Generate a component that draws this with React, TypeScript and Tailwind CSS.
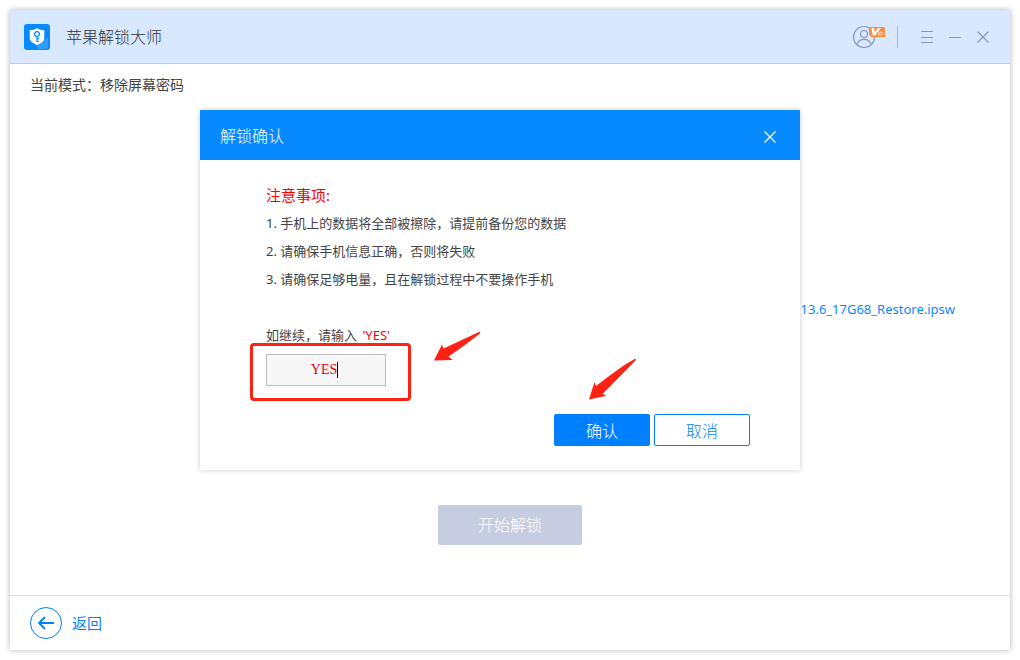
import { useState } from "react";

const notices = [
  "手机上的数据将全部被擦除，请提前备份您的数据",
  "请确保手机信息正确，否则将失败",
  "请确保足够电量，且在解锁过程中不要操作手机",
];

const Logo = () => (
  <svg viewBox="0 0 26 26" className="h-[26px] w-[26px]">
    <rect width="26" height="26" rx="3" fill="#078aff" />
    <path
      d="M12 20l6-4h3l1-2h2v7a3 3 0 0 1-2 4h-9v-3z"
      fill="#2f9dff"
    />
    <path
      d="M13 4c2 1.600 4.500 2.200 7.300 2.300v7.200c0 3.500-2.800 5.800-7.300 7.500-4.500-1.700-7.300-4-7.300-7.500V6.300C8.500 6.200 11 5.600 13 4z"
      fill="#fff"
    />
    <g fill="none" stroke="#078aff" strokeWidth="1.200">
      <circle cx="13" cy="10" r="2.400" />
      <path d="M13 12.400V18M13 14.600h2M13 17.500h2" />
    </g>
  </svg>
);

const UserIcon = () => (
  <svg viewBox="0 0 34 24" className="h-6 w-[34px]">
    <g fill="none" stroke="#8796c0" strokeWidth="1.200">
      <circle cx="12" cy="12" r="10.500" />
      <circle cx="12" cy="9" r="3.500" />
      <path d="M5 19.500c.8-3.200 3.500-5.200 7-5.200s6.200 2 7 5.200" />
    </g>
    <path
      d="M17 2h14a2 2 0 0 1 2 2v8H21c-3 0-4-2-4-5z"
      fill="#ff8b3d"
    />
    <path
      d="M19.500 3h2.500l.8 4L26 3h3l-6 7.500h-2.300z"
      fill="#fff"
    />
    <path
      d="M26.500 11l.7-3.800h2.300a1.200 1.200 0 0 1 0 2.400H27"
      fill="none"
      stroke="#ffe0c8"
      strokeWidth="1"
    />
  </svg>
);

const TitleBar = () => (
  <header className="flex h-[54px] items-center border-b border-[#c5ccd9] bg-[#d8e8ff] pl-[14px] pr-[21px]">
    <Logo />
    <h1 className="ml-4 flex-1 text-base text-[#333]">苹果解锁大师</h1>
    <button aria-label="用户" className="mr-[11px]">
      <UserIcon />
    </button>
    <span className="mr-[23px] h-[22px] w-px bg-[#a9b9da]" />
    <div className="flex items-center gap-4 text-[#8796c0]">
      <button aria-label="菜单">
        <svg viewBox="0 0 12 12" className="h-3 w-3" stroke="currentColor">
          <path d="M0 .5h12M0 6.500h12M0 11.500h12" />
        </svg>
      </button>
      <button aria-label="最小化">
        <svg viewBox="0 0 12 12" className="h-3 w-3" stroke="currentColor">
          <path d="M0 6.500h12" />
        </svg>
      </button>
      <button aria-label="关闭">
        <svg viewBox="0 0 12 12" className="h-3 w-3" stroke="currentColor">
          <path d="M.5.5l11 11M11.500.5l-11 11" strokeWidth="1.200" />
        </svg>
      </button>
    </div>
  </header>
);

const ConfirmDialog = () => {
  const [answer, setAnswer] = useState<string>("YES");

  return (
    <section
      role="dialog"
      aria-labelledby="dialog-title"
      className="absolute left-[190px] top-[100px] w-[600px] bg-white shadow-[0_0_6px_rgba(0,0,0,0.2)]"
    >
      <div className="flex h-[50px] items-center justify-between bg-[#078aff] pl-5 pr-6 text-white">
        <h2 id="dialog-title" className="pt-0.5 text-base">
          解锁确认
        </h2>
        <button aria-label="关闭对话框" className="pt-1">
          <svg viewBox="0 0 12 12" className="h-3 w-3" stroke="currentColor">
            <path d="M.5.5l11 11M11.500.5l-11 11" strokeWidth="1.200" />
          </svg>
        </button>
      </div>
      <div className="px-[66px] pt-[21px] text-[13px] font-normal leading-7 text-[#444]">
        <p className="text-[15px] text-[#f00]">注意事项:</p>
        {notices.map((notice, index) => (
          <p key={notice}>
            {index + 1}. {notice}
          </p>
        ))}
        <label htmlFor="answer" className="mt-[30px] block leading-6">
          如继续，请输入 <span className="ml-0.5 text-[#f00]">'YES'</span>
        </label>
        <div className="relative mt-[7px] w-[120px]">
          <input
            id="answer"
            type="text"
            value={answer}
            onChange={(e) => setAnswer(e.target.value)}
            className="block h-8 w-full border border-[#bbb] bg-[#f7f7f7] pr-1 text-center font-['Liberation_Serif',serif] text-sm text-[#e60012] outline-none"
          />
          <span className="absolute right-12 top-2 h-4 w-px bg-black" />
          {/* highlight around the input */}
          <span className="pointer-events-none absolute -left-4 -top-[11px] h-[58px] w-[161px] rounded border-3 border-[#ff2213]" />
        </div>
      </div>
      <div className="mt-7 flex justify-end gap-1 pb-6 pr-[50px] text-base">
        <button className="h-8 w-24 rounded-xs bg-[#0080ff] pt-0.5 text-white">
          确认
        </button>
        <button className="h-8 w-24 rounded-xs border border-[#0080ff] bg-white pt-0.5 text-[#0080ff]">
          取消
        </button>
      </div>
      <svg
        viewBox="0 0 48 30"
        className="pointer-events-none absolute left-[233px] top-[221px] h-[30px] w-12"
      >
        <path
          d="M1 29.500L9 13.500l1.500 4L46 1q2-.5 1 1.500C37 10 27 18 15.500 25.500l4 3.500z"
          fill="#ff2213"
        />
      </svg>
      <svg
        viewBox="0 0 50 42"
        className="pointer-events-none absolute left-[388px] top-[248px] h-[42px] w-[50px]"
      >
        <path
          d="M1 41.500L6.500 24l1.500 4C20 19 33 8.500 46.500 1q2.500-.5 1 1.500L14.500 36l4 1.700z"
          fill="#ff2213"
        />
      </svg>
    </section>
  );
};

const App = () => {
  return (
    <div className="flex min-h-screen bg-white p-[10px] font-['Noto_Sans','Noto_Sans_CJK_SC',sans-serif] font-light">
      <div className="relative flex flex-1 flex-col bg-white shadow-[0_0_6px_rgba(0,0,0,0.3)]">
        <TitleBar />
        <main className="flex flex-1 flex-col px-5">
          <p className="mt-[9px] text-sm font-normal leading-6 text-[#444]">
            当前模式：移除屏幕密码
          </p>
          <div className="mt-[200px] flex justify-end pr-[35px]">
            <a
              href="#firmware"
              className="text-[13px] font-normal leading-6 text-[#078aff]"
            >
              13.6_17G68_Restore.ipsw
            </a>
          </div>
          <button
            disabled
            className="mb-[50px] mt-auto h-10 w-36 self-center rounded-xs bg-[#c7cde0] text-base text-white"
          >
            开始解锁
          </button>
        </main>
        <footer className="flex h-[55px] items-center border-t border-[#ddd] px-5">
          <button className="flex items-center gap-[10px] text-[15px] font-normal text-[#0080ff]">
            <svg
              viewBox="0 0 32 32"
              className="h-8 w-8"
              fill="none"
              stroke="currentColor"
            >
              <circle cx="16" cy="16" r="15.500" />
              <path d="M24 16H9M15 10l-6 6 6 6" strokeWidth="1.800" />
            </svg>
            返回
          </button>
        </footer>
        <ConfirmDialog />
      </div>
    </div>
  );
};

export default App;
